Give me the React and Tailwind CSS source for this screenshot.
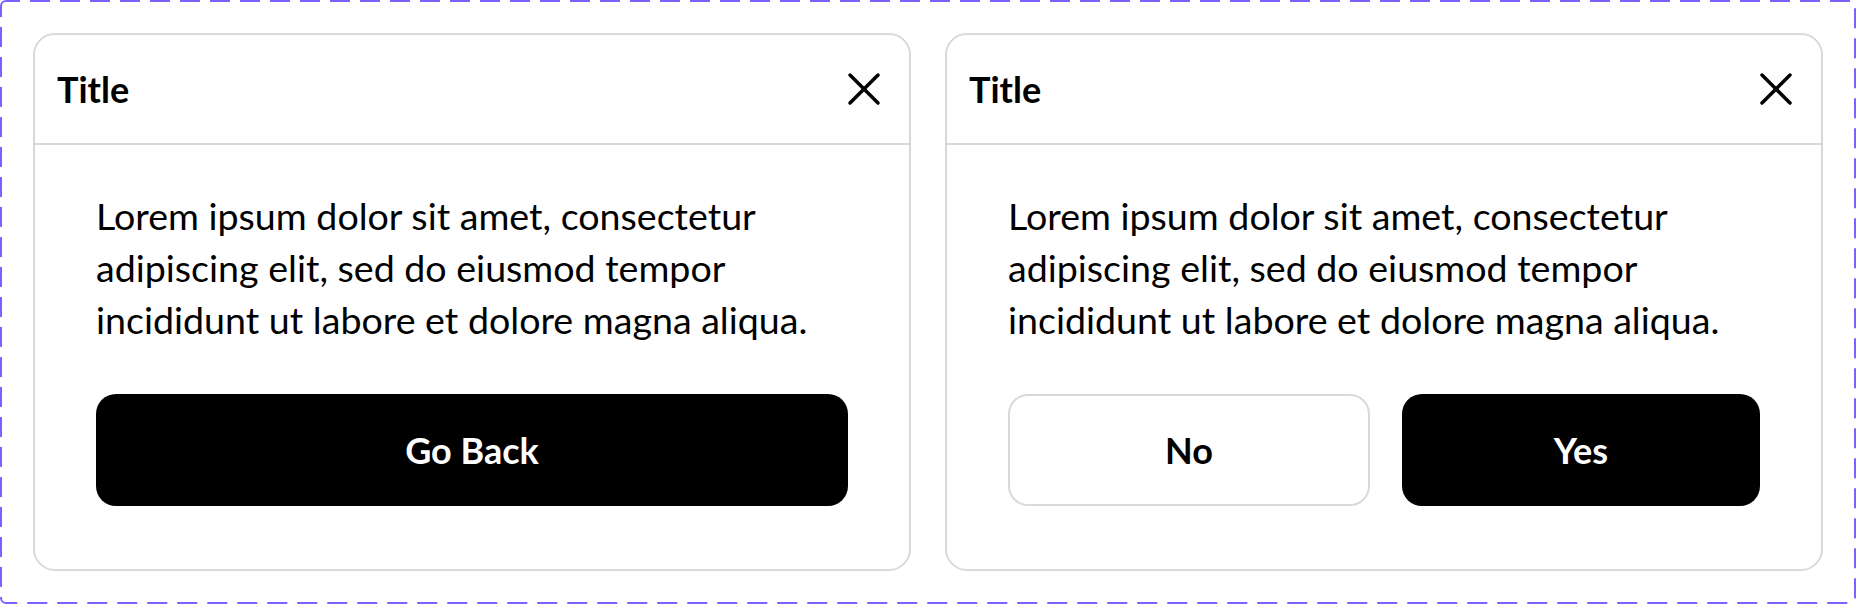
import React from 'react'

function CloseIcon() {
  return (
    <svg width="40" height="40" viewBox="0 0 40 40" fill="none" stroke="#000" strokeWidth="3.5" strokeLinecap="round">
      <path d="M6 6L34 34" />
      <path d="M34 6L6 34" />
    </svg>
  )
}

function Dialog({ children }) {
  return (
    <div className="flex-1 flex flex-col bg-white border-2 border-[#d9d9d9] rounded-[22px]">
      <div className="h-[110px] flex items-center justify-between pl-[22px] pr-[25px] border-b-2 border-[#d9d9d9]">
        <span className="text-[36px] font-bold text-black leading-none">Title</span>
        <button type="button" className="w-10 h-10 flex items-center justify-center">
          <CloseIcon />
        </button>
      </div>
      <div className="px-[61px] pt-[45px]">
        <p className="text-[37.6px] leading-[52px] text-black">
          Lorem ipsum dolor sit amet, consectetur adipiscing elit, sed do eiusmod tempor incididunt ut labore et dolore magna aliqua.
        </p>
        <div className="mt-[48px] flex gap-[32px]">{children}</div>
      </div>
    </div>
  )
}

export default function App() {
  return (
    <div className="relative w-[1856px] h-[604px] p-[33px] flex gap-[34px] bg-white font-[Lato,sans-serif]">
      {/* dashed component-set frame */}
      <svg className="absolute inset-0 pointer-events-none" width="1856" height="604" viewBox="0 0 1856 604" fill="none">
        <rect x="1" y="1" width="1854" height="602" rx="5" stroke="#7b61ff" strokeWidth="2" strokeDasharray="20 10" strokeDashoffset="6" />
      </svg>

      <Dialog>
        <button type="button" className="flex-1 h-[112px] rounded-[20px] bg-black text-white text-[36px] font-bold">
          Go Back
        </button>
      </Dialog>

      <Dialog>
        <button type="button" className="flex-1 h-[112px] rounded-[20px] bg-white border-2 border-[#d9d9d9] text-black text-[36px] font-bold">
          No
        </button>
        <button type="button" className="flex-1 h-[112px] rounded-[20px] bg-black text-white text-[36px] font-bold">
          Yes
        </button>
      </Dialog>
    </div>
  )
}
